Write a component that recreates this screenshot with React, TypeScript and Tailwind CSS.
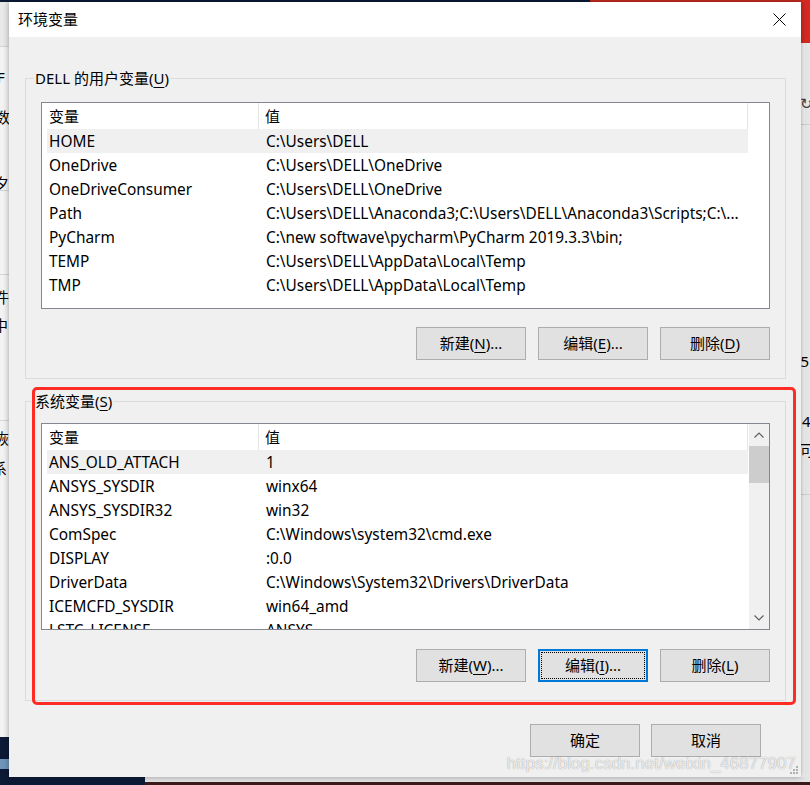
import React from "react";

type EnvVar = { name: string; value: string };

const userVars: EnvVar[] = [
  { name: "HOME", value: "C:\\Users\\DELL" },
  { name: "OneDrive", value: "C:\\Users\\DELL\\OneDrive" },
  { name: "OneDriveConsumer", value: "C:\\Users\\DELL\\OneDrive" },
  { name: "Path", value: "C:\\Users\\DELL\\Anaconda3;C:\\Users\\DELL\\Anaconda3\\Scripts;C:\\..." },
  { name: "PyCharm", value: "C:\\new softwave\\pycharm\\PyCharm 2019.3.3\\bin;" },
  { name: "TEMP", value: "C:\\Users\\DELL\\AppData\\Local\\Temp" },
  { name: "TMP", value: "C:\\Users\\DELL\\AppData\\Local\\Temp" },
];

const systemVars: EnvVar[] = [
  { name: "ANS_OLD_ATTACH", value: "1" },
  { name: "ANSYS_SYSDIR", value: "winx64" },
  { name: "ANSYS_SYSDIR32", value: "win32" },
  { name: "ComSpec", value: "C:\\Windows\\system32\\cmd.exe" },
  { name: "DISPLAY", value: ":0.0" },
  { name: "DriverData", value: "C:\\Windows\\System32\\Drivers\\DriverData" },
  { name: "ICEMCFD_SYSDIR", value: "win64_amd" },
  { name: "LSTC_LICENSE", value: "ANSYS" },
];

// access key letter, underlined like the Win32 mnemonic
const Key = ({ k }: { k: string }) => (
  <span className="underline underline-offset-[3px] decoration-1">{k}</span>
);

const Chevron = ({ up }: { up?: boolean }) => (
  <svg width="10" height="6" viewBox="0 0 10 6" className="block">
    <path
      d={up ? "M0.5 5.5 L5 1 L9.5 5.5" : "M0.5 0.5 L5 5 L9.5 0.5"}
      fill="none"
      stroke="#606060"
      strokeWidth="1.2"
    />
  </svg>
);

const ScrollBar = () => (
  <div className="flex w-[20px] shrink-0 flex-col bg-[#f0f0f0]">
    <div className="flex h-[22px] items-center justify-center">
      <Chevron up />
    </div>
    <div className="h-[37px] bg-[#cdcdcd]" />
    <div className="flex-1" />
    <div className="flex h-[22px] items-center justify-center">
      <Chevron />
    </div>
  </div>
);

const ListView = ({ rows, scroll }: { rows: EnvVar[]; scroll?: boolean }) => (
  <div className="flex h-[207px] border border-[#828790] bg-white text-[15.4px]">
    <div className="min-w-0 flex-1 overflow-hidden pl-[5px]">
      <div className="w-[701px]">
        <div className="flex h-[26px] text-[15px]">
          <div className="flex w-[212px] shrink-0 items-center border-r border-[#e5e5e5] pl-[2px]">变量</div>
          <div className="flex flex-1 items-center border-r border-[#e5e5e5] pl-[6px]">值</div>
        </div>
        {rows.map((r, i) => (
          <div key={r.name} className={`flex h-[24px] items-center whitespace-nowrap pt-[2px] ${i === 0 ? "bg-[#f0f0f0]" : ""}`}>
            <div className="w-[213px] shrink-0 overflow-hidden pl-[2px]">{r.name}</div>
            <div className="flex-1 overflow-hidden pl-[6px]">{r.value}</div>
          </div>
        ))}
      </div>
    </div>
    {scroll && <ScrollBar />}
  </div>
);

const Button = ({ children, focused }: { children: React.ReactNode; focused?: boolean }) =>
  focused ? (
    <button className="flex h-[33px] w-[110px] items-center justify-center border-2 border-[#0078d7] bg-[#e1e1e1] p-[1px]">
      <span className="flex h-full w-full items-center justify-center border border-dotted border-black">{children}</span>
    </button>
  ) : (
    <button className="flex h-[33px] w-[110px] items-center justify-center border border-[#adadad] bg-[#e1e1e1]">
      {children}
    </button>
  );

const Group = ({ label, className, children }: { label: React.ReactNode; className?: string; children: React.ReactNode }) => (
  <fieldset className={`border border-[#dcdcdc] px-[15px] pb-[18px] ${className ?? ""}`}>
    <legend className="ml-[-7px] px-[1px] leading-[20px]">{label}</legend>
    {children}
  </fieldset>
);

const SideWindowLeft = () => (
  <div className="absolute left-0 top-[2px] h-[775px] w-[9px] overflow-hidden bg-[#f3f3f3] text-[15px] leading-none text-black">
    <div className="h-[44px] bg-[#e9e9e9]" />
    <div className="border-t border-[#d6d6d6]" />
    <span className="absolute left-[-3px] top-[68px]">F</span>
    <span className="absolute left-[-5px] top-[108px]">数</span>
    <span className="absolute left-[-6px] top-[174px]">夕</span>
    <div className="absolute left-0 top-[188px] w-full border-t border-[#d6d6d6]" />
    <div className="absolute left-0 top-[272px] w-full border-t border-[#d6d6d6]" />
    <span className="absolute left-[-6px] top-[288px]">件</span>
    <span className="absolute left-[-7px] top-[316px]">中</span>
    <div className="absolute left-0 top-[418px] w-full border-t border-[#d6d6d6]" />
    <span className="absolute left-[-6px] top-[429px]">恢</span>
    <span className="absolute left-[-8px] top-[459px]">系</span>
    <div className="absolute bottom-0 left-0 h-[40px] w-full bg-[#0c1a36]" />
    <div className="absolute bottom-[8px] left-0 h-[10px] w-full bg-[#6f95b8]" />
  </div>
);

const SideWindowRight = () => (
  <div className="absolute right-0 top-0 h-[777px] w-[9px] overflow-hidden bg-[#f1f1f1] text-[15px] leading-none text-black">
    <div className="h-[43px] bg-[#d42a22]" />
    <div className="absolute left-[4px] top-[43px] h-full w-[5px] bg-[#e6e6e6]" />
    <span className="absolute left-[-1px] top-[96px] text-[#444]">↻</span>
    <div className="absolute left-0 top-[124px] w-full border-t border-[#d0d0d0]" />
    <span className="absolute left-[-4px] top-[354px]">'5</span>
    <span className="absolute left-[1px] top-[414px]">4</span>
    <span className="absolute left-[-1px] top-[443px]">可</span>
    <div className="absolute left-0 top-[494px] w-full border-t border-[#d0d0d0]" />
  </div>
);

export default function App() {
  return (
    <div className="relative h-[785px] w-[810px] overflow-hidden bg-[#0c1a36] font-['Noto_Sans','Noto_Sans_CJK_SC',sans-serif] text-[15px] text-black">
      {/* desktop behind the dialog */}
      <div className="absolute left-[590px] top-0 h-[3px] w-[220px] bg-[#c82a22]" />
      <div className="absolute left-[145px] top-[777px] h-[5px] w-[665px] bg-[#e4e4e4]" />
      <div className="absolute left-[145px] top-[782px] h-[3px] w-[665px] bg-[#3a1b1b]" />
      <SideWindowLeft />
      <SideWindowRight />

      {/* 环境变量 dialog */}
      <div className="absolute left-[9px] top-[2px] flex h-[775px] w-[792px] flex-col bg-[#f0f0f0] shadow-[0_0_6px_rgba(0,0,0,0.35)]">
        <div className="flex h-[35px] shrink-0 items-center justify-between bg-white pl-[9px] pr-[15px]">
          <span>环境变量</span>
          <svg width="13" height="13" viewBox="0 0 13 13">
            <path d="M0.5 0.5 L12.5 12.5 M12.5 0.5 L0.5 12.5" stroke="#000" strokeWidth="1" />
          </svg>
        </div>

        <div className="flex flex-1 flex-col pl-[16px] pr-[15px]">
          <Group label={<>DELL 的用户变量(<Key k="U" />)</>} className="mt-[31px]">
            <div className="pt-[14px]">
              <ListView rows={userVars} />
            </div>
            <div className="mt-[18px] flex justify-end gap-[12px]">
              <Button>新建(<Key k="N" />)...</Button>
              <Button>编辑(<Key k="E" />)...</Button>
              <Button>删除(<Key k="D" />)</Button>
            </div>
          </Group>

          <Group label={<>系统变量(<Key k="S" />)</>} className="mt-[12px]">
            <div className="pt-[12px]">
              <ListView rows={systemVars} scroll />
            </div>
            <div className="mt-[19px] flex justify-end gap-[12px]">
              <Button>新建(<Key k="W" />)...</Button>
              <Button focused>编辑(<Key k="I" />)...</Button>
              <Button>删除(<Key k="L" />)</Button>
            </div>
          </Group>

          <div className="mt-[23px] flex justify-end gap-[11px] pr-[25px]">
            <Button>确定</Button>
            <Button>取消</Button>
          </div>
        </div>

        <span className="absolute bottom-[1px] right-[5px] font-['Liberation_Sans',sans-serif] text-[17px] text-white/80 [text-shadow:0_0_1px_rgba(0,0,0,0.45)]">
          https://blog.csdn.net/weixin_46877907
        </span>
        <svg width="8" height="8" viewBox="0 0 8 8" className="absolute bottom-[3px] right-[3px]">
          <rect x="6" y="0" width="2" height="2" fill="#b0b0b0" />
          <rect x="3" y="3" width="2" height="2" fill="#b0b0b0" />
          <rect x="6" y="3" width="2" height="2" fill="#b0b0b0" />
          <rect x="0" y="6" width="2" height="2" fill="#b0b0b0" />
          <rect x="3" y="6" width="2" height="2" fill="#b0b0b0" />
          <rect x="6" y="6" width="2" height="2" fill="#b0b0b0" />
        </svg>
      </div>

      {/* red annotation frame around the system variables group */}
      <div className="pointer-events-none absolute left-[32px] top-[387px] h-[318px] w-[764px] rounded-[5px] border-[3px] border-[#fe2c24]" />
    </div>
  );
}
